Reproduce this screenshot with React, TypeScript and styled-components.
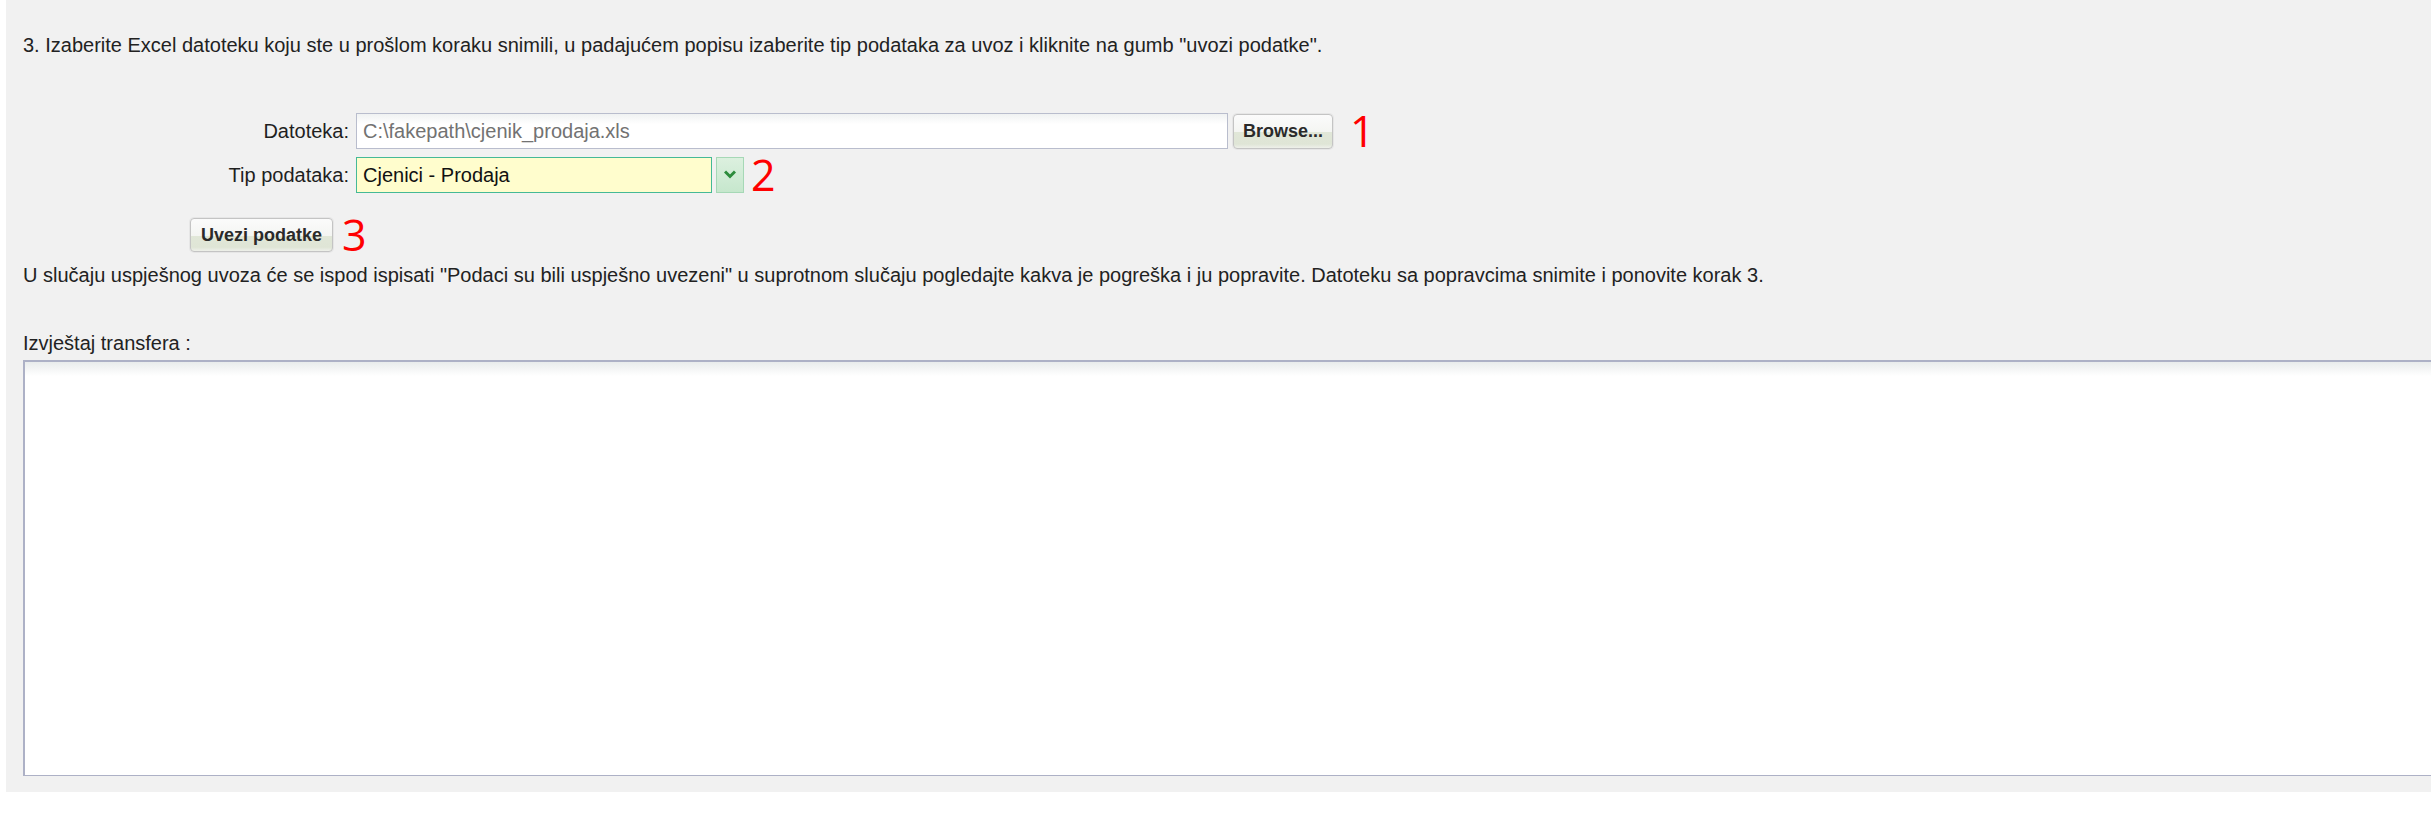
import React from "react";
import styled, { createGlobalStyle } from "styled-components";

const GlobalStyle = createGlobalStyle`
  html, body {
    margin: 0;
    padding: 0;
    background: #ffffff;
    overflow: hidden;
  }
  body {
    font-family: "Liberation Sans", Arial, sans-serif;
  }
`;

const Panel = styled.div`
  margin-left: 6px;
  width: calc(100vw - 6px);
  overflow: hidden;
  background-color: #f1f1f1;
  padding: 34px 0 16px 17px;
  box-sizing: border-box;
  color: #222;
  font-size: 20px;
  line-height: 23px;
`;

const Intro = styled.p`
  margin: 0 0 56px 0;
`;

const Form = styled.div`
  display: grid;
  grid-template-columns: 326px auto;
  column-gap: 7px;
  row-gap: 8px;
  align-items: center;
`;

const Label = styled.label`
  text-align: right;
  color: #1f1f1f;
`;

const Field = styled.div`
  display: flex;
  align-items: center;
`;

const PathInput = styled.input`
  width: 872px;
  height: 36px;
  box-sizing: border-box;
  border: 1px solid #b9bdcd;
  background: linear-gradient(to bottom, #f0f2f2 0%, #ffffff 30%, #ffffff 100%);
  padding: 0 6px;
  font-family: "Liberation Sans", Arial, sans-serif;
  font-size: 20px;
  color: #727272;
  outline: none;
`;

const Button = styled.button<{ $h?: number }>`
  height: ${(p) => p.$h ?? 35}px;
  box-sizing: border-box;
  border: 1px solid #c4c4c4;
  border-radius: 4px;
  background: linear-gradient(
    to bottom,
    #fbfbfb 0%,
    #f4f5f2 52%,
    #e1e7d8 53%,
    #dfe5d6 88%,
    #eef0ea 100%
  );
  box-shadow: 0 0 0 1px #e6e6e6;
  font-family: "Liberation Sans", Arial, sans-serif;
  font-weight: bold;
  font-size: 18px;
  color: #2a2a2a;
  padding: 0 10px;
  cursor: pointer;
`;

const BrowseButton = styled(Button)`
  width: 100px;
  margin-left: 5px;
  padding: 0;
`;

const Marker = styled.span<{ $gap: number; $lh: number }>`
  margin-left: ${(p) => p.$gap}px;
  font-family: "Open Sans", "Liberation Sans", sans-serif;
  font-size: 43px;
  line-height: ${(p) => p.$lh}px;
  color: #ff0000;
`;

const Select = styled.select`
  width: 356px;
  height: 36px;
  box-sizing: border-box;
  appearance: none;
  -webkit-appearance: none;
  border: 1px solid #45b996;
  background-color: #fffdcd;
  padding: 0 6px;
  font-family: "Liberation Sans", Arial, sans-serif;
  font-size: 20px;
  color: #111;
  outline: none;
`;

const ArrowBox = styled.span`
  width: 28px;
  height: 36px;
  box-sizing: border-box;
  margin-left: 4px;
  border: 1px solid #a6d8b6;
  background: linear-gradient(to bottom, #dcf0df 0%, #c6e7cd 100%);
  display: flex;
  justify-content: center;
  padding-top: 12px;
`;

const SubmitRow = styled.div`
  display: flex;
  align-items: center;
  margin: 25px 0 0 167px;
`;

const Note = styled.p`
  margin: 12px 0 0 0;
`;

const ReportLabel = styled.div`
  margin-top: 45px;
`;

const Report = styled.textarea`
  display: block;
  margin-top: 5px;
  width: 2460px;
  height: 416px;
  box-sizing: border-box;
  border: 1px solid #adb1c6;
  border-top-width: 2px;
  border-left-width: 2px;
  background: linear-gradient(to bottom, #e9ecec 0px, #ffffff 14px, #ffffff 100%);
  resize: none;
  outline: none;
`;

export default function App() {
  return (
    <>
      <GlobalStyle />
      <Panel>
        <Intro>
          3. Izaberite Excel datoteku koju ste u prošlom koraku snimili, u
          padajućem popisu izaberite tip podataka za uvoz i kliknite na gumb
          "uvozi podatke".
        </Intro>
        <Form>
          <Label>Datoteka:</Label>
          <Field>
            <PathInput readOnly value="C:\fakepath\cjenik_prodaja.xls" />
            <BrowseButton>Browse...</BrowseButton>
            <Marker $gap={17} $lh={36}>1</Marker>
          </Field>
          <Label>Tip podataka:</Label>
          <Field>
            <Select defaultValue="prodaja">
              <option value="prodaja">Cjenici - Prodaja</option>
              <option value="nabava">Cjenici - Nabava</option>
            </Select>
            <ArrowBox>
              <svg width="12" height="9" viewBox="0 0 12 9">
                <path d="M1 1.5 L6 6.5 L11 1.5" fill="none" stroke="#2c8c3c" strokeWidth="3" />
              </svg>
            </ArrowBox>
            <Marker $gap={7} $lh={36}>2</Marker>
          </Field>
        </Form>
        <SubmitRow>
          <Button $h={34}>Uvezi podatke</Button>
          <Marker $gap={9} $lh={34}>3</Marker>
        </SubmitRow>
        <Note>
          U slučaju uspješnog uvoza će se ispod ispisati "Podaci su bili
          uspješno uvezeni" u suprotnom slučaju pogledajte kakva je pogreška i
          ju popravite. Datoteku sa popravcima snimite i ponovite korak 3.
        </Note>
        <ReportLabel>Izvještaj transfera :</ReportLabel>
        <Report />
      </Panel>
    </>
  );
}
